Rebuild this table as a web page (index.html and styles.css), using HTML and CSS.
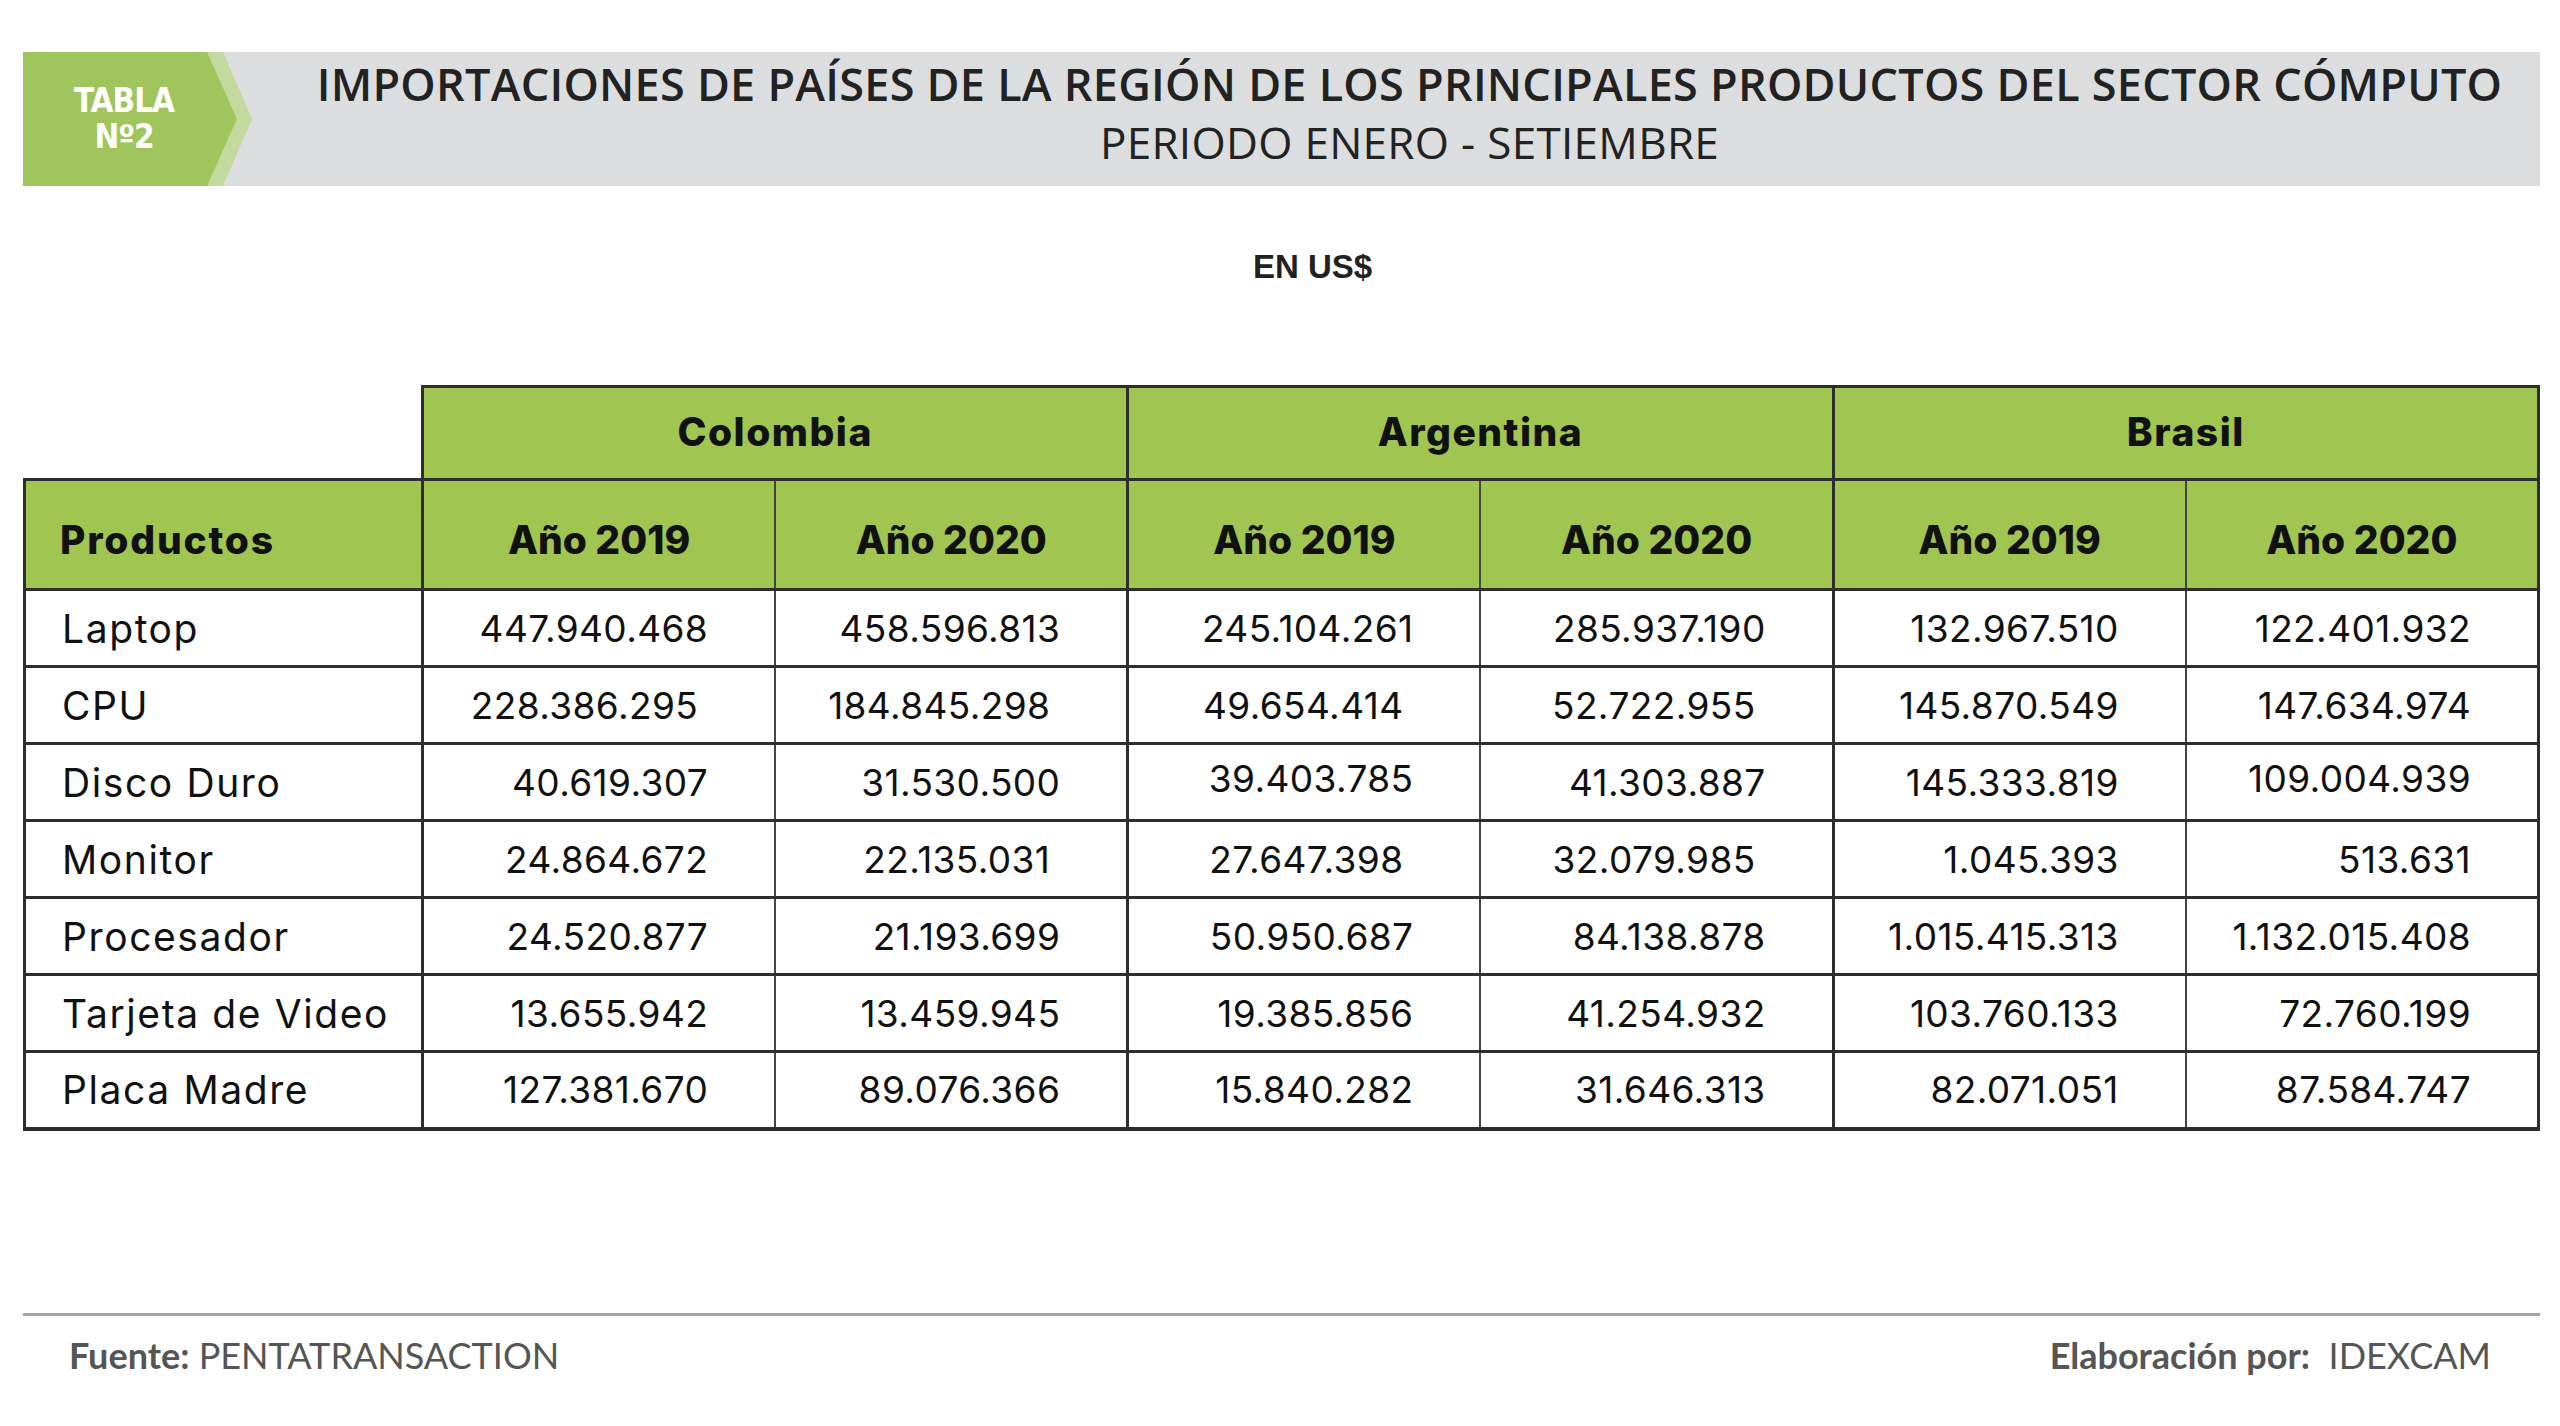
FILE: index.html
```html
<!DOCTYPE html>
<html lang="es">
<head>
<meta charset="utf-8">
<title>Tabla Nº2</title>
<link rel="stylesheet" href="styles.css">
</head>
<body>
<div class="page">
  <header class="banner">
    <div class="tab"><div class="tab-label">TABLA<br>Nº2</div></div>
    <div class="titles">
      <h1 class="title">IMPORTACIONES DE PAÍSES DE LA REGIÓN DE LOS PRINCIPALES PRODUCTOS DEL SECTOR CÓMPUTO</h1>
      <p class="subtitle">PERIODO ENERO - SETIEMBRE</p>
    </div>
  </header>

  <p class="unit">EN US$</p>

  <table class="data">
    <colgroup>
      <col class="c-prod">
      <col><col><col><col><col><col>
    </colgroup>
    <thead>
      <tr class="r-country">
        <th class="corner"></th>
        <th colspan="2">Colombia</th>
        <th colspan="2">Argentina</th>
        <th colspan="2">Brasil</th>
      </tr>
      <tr class="r-year">
        <th class="prod">Productos</th>
        <th class="y19">Año 2019</th><th class="y20">Año 2020</th>
        <th class="y19">Año 2019</th><th class="y20">Año 2020</th>
        <th class="y19">Año 2019</th><th class="y20">Año 2020</th>
      </tr>
    </thead>
    <tbody>
      <tr>
        <td class="prod">Laptop</td>
        <td class="y19">447.940.468</td><td class="y20">458.596.813</td>
        <td class="y19">245.104.261</td><td class="y20">285.937.190</td>
        <td class="y19">132.967.510</td><td class="y20">122.401.932</td>
      </tr>
      <tr>
        <td class="prod">CPU</td>
        <td class="y19 in">228.386.295</td><td class="y20 in">184.845.298</td>
        <td class="y19 in">49.654.414</td><td class="y20 in">52.722.955</td>
        <td class="y19">145.870.549</td><td class="y20">147.634.974</td>
      </tr>
      <tr>
        <td class="prod">Disco Duro</td>
        <td class="y19">40.619.307</td><td class="y20">31.530.500</td>
        <td class="y19 up">39.403.785</td><td class="y20">41.303.887</td>
        <td class="y19">145.333.819</td><td class="y20 up">109.004.939</td>
      </tr>
      <tr>
        <td class="prod">Monitor</td>
        <td class="y19">24.864.672</td><td class="y20 in">22.135.031</td>
        <td class="y19 in">27.647.398</td><td class="y20 in">32.079.985</td>
        <td class="y19">1.045.393</td><td class="y20">513.631</td>
      </tr>
      <tr>
        <td class="prod">Procesador</td>
        <td class="y19">24.520.877</td><td class="y20">21.193.699</td>
        <td class="y19">50.950.687</td><td class="y20">84.138.878</td>
        <td class="y19">1.015.415.313</td><td class="y20">1.132.015.408</td>
      </tr>
      <tr>
        <td class="prod">Tarjeta de Video</td>
        <td class="y19">13.655.942</td><td class="y20">13.459.945</td>
        <td class="y19">19.385.856</td><td class="y20">41.254.932</td>
        <td class="y19">103.760.133</td><td class="y20">72.760.199</td>
      </tr>
      <tr>
        <td class="prod">Placa Madre</td>
        <td class="y19">127.381.670</td><td class="y20">89.076.366</td>
        <td class="y19">15.840.282</td><td class="y20">31.646.313</td>
        <td class="y19">82.071.051</td><td class="y20">87.584.747</td>
      </tr>
    </tbody>
  </table>

  <footer class="foot">
    <div class="source"><b>Fuente:</b> PENTATRANSACTION</div>
    <div class="author"><b>Elaboración por:</b>&nbsp; IDEXCAM</div>
  </footer>
</div>
</body>
</html>
```

FILE: styles.css
```css
* { box-sizing: border-box; }

body {
  margin: 0;
  background: #ffffff;
  color: #1e1e1e;
  font-family: "Inter", "Open Sans", sans-serif;
}

.page {
  width: 2560px;
  padding: 52px 20px 0 23px;
}

/* ---------- banner ---------- */
.banner {
  display: flex;
  height: 134px;
  background: #dcdddf;
}

.tab {
  position: relative;
  flex: 0 0 230px;
  background: #c2da9e;
  clip-path: polygon(0 0, 200px 0, 229px 50%, 200px 100%, 0 100%);
}

.tab::before {
  content: "";
  position: absolute;
  inset: 0;
  background: #9fc55c;
  clip-path: polygon(0 0, 184px 0, 214px 50%, 184px 100%, 0 100%);
}

.tab-label {
  position: relative;
  width: 202px;
  height: 100%;
  display: flex;
  align-items: center;
  justify-content: center;
  text-align: center;
  color: #ffffff;
  font-family: "DejaVu Sans Condensed", "DejaVu Sans", sans-serif;
  font-weight: 700;
  font-size: 33px;
  line-height: 36px;
  letter-spacing: -1px;
}

.titles {
  flex: 1;
  padding: 3px 0 0 26px;
  text-align: center;
  color: #222222;
}

.title {
  margin: 0;
  font-family: "Open Sans", sans-serif;
  font-weight: 600;
  font-size: 45px;
  line-height: 58px;
  letter-spacing: 0.25px;
}

.subtitle {
  margin: 0;
  font-family: "Open Sans", sans-serif;
  font-weight: 400;
  font-size: 44px;
  line-height: 58px;
  letter-spacing: 0.3px;
}

/* ---------- unit ---------- */
.unit {
  margin: 61px 0 0;
  text-align: center;
  padding-left: 62px;
  font-family: "Liberation Sans", Arial, sans-serif;
  font-weight: 700;
  font-size: 33px;
  line-height: 40px;
  color: #222;
}

/* ---------- table ---------- */
.data {
  margin-top: 98px;
  width: 2517px;
  table-layout: fixed;
  border-collapse: collapse;
  font-family: "Inter", sans-serif;
  color: #111;
}

.c-prod { width: 398px; }

.data th,
.data td {
  border: 3px solid #2e2e2e;
  padding: 0;
}

.data th {
  background: #a0c550;
  font-weight: 800;
  font-size: 39px;
  text-align: center;
}

.data th.corner {
  background: transparent;
  border: none;
}

.r-country th {
  height: 93px;
  letter-spacing: 1.5px;
  padding-bottom: 4px;
}

.r-year th {
  height: 110px;
  padding-top: 10px;
}

.data .y19 { border-right: 2px solid #444; }
.data .y20 { border-left: 2px solid #444; }

.data th.prod {
  text-align: left;
  padding-left: 34px;
  letter-spacing: 1.8px;
}

.data td {
  height: 77px;
  font-size: 37px;
  font-weight: 400;
  text-align: right;
  padding-right: 66px;
  letter-spacing: 0.4px;
}

.data td.prod {
  text-align: left;
  padding-left: 36px;
  padding-right: 0;
  font-size: 39px;
  letter-spacing: 1.6px;
}

.data td.in { padding-right: 76px; }
.data td.up { padding-bottom: 8px; }

.data tbody tr:last-child td {
  border-bottom-width: 4px;
}

/* ---------- footer ---------- */
.foot {
  margin-top: 182px;
  border-top: 3px solid #a3a3a3;
  display: flex;
  justify-content: space-between;
  padding: 19px 49px 0 46px;
  font-family: "Lato", sans-serif;
  font-size: 36px;
  line-height: 40px;
  color: #555555;
}

.foot b { font-weight: 700; }
```
